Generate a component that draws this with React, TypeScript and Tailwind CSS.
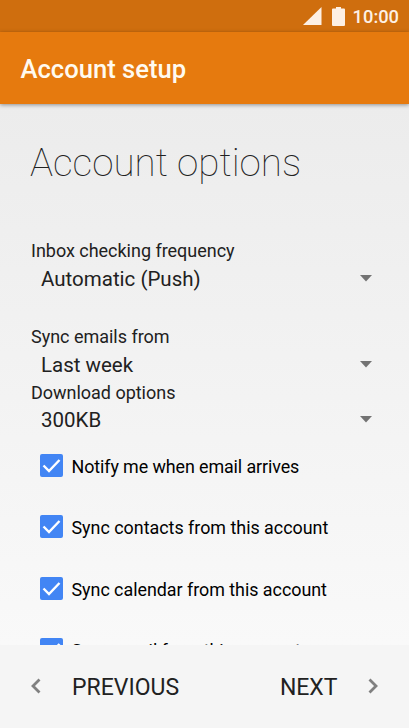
import React from 'react';

interface SpinnerProps {
    label: string;
    value: string;
    className?: string;
}

const spinners: SpinnerProps[] = [
    { label: 'Inbox checking frequency', value: 'Automatic (Push)', className: 'mb-[33.5px]' },
    { label: 'Sync emails from', value: 'Last week', className: 'mb-[3px]' },
    { label: 'Download options', value: '300KB', className: 'mb-[1px]' },
];

const checkboxes = [
    { label: 'Notify me when email arrives', className: 'tracking-[-0.1px]' },
    { label: 'Sync contacts from this account', className: 'tracking-[-0.01px]' },
    { label: 'Sync calendar from this account', className: 'tracking-[-0.03px]' },
    { label: 'Sync email from this account', className: 'tracking-[-0.07px]' },
];

const StatusBar: React.FC = () => (
    <div className="flex h-8 items-center justify-end bg-[#cf6e0e] pr-[10px] text-[#fdf0e4]">
        <svg className="h-[18px] w-[19px]" viewBox="0 0 19 18" fill="currentColor">
            <path d="M18.5 0v18H0z" />
        </svg>
        <svg className="ml-[10px] h-[19px] w-[13px]" viewBox="0 0 13 19" fill="currentColor">
            <path d="M4 0h5v1.5h3q1 0 1 1V18q0 1-1 1H1q-1 0-1-1V2.500q0-1 1-1h3z" />
        </svg>
        <span className="ml-[8px] pt-px text-[18.3px] font-medium leading-8">10:00</span>
    </div>
);

const Spinner: React.FC<SpinnerProps> = ({ label, value, className }) => (
    <div className={className}>
        <div className="h-6 whitespace-nowrap text-[18px] leading-[22px] tracking-[-0.02px]">{label}</div>
        <div className="flex h-[28.5px] items-center justify-between pl-[10px] pr-[6px]">
            <span className="whitespace-nowrap pt-px text-[20.5px] leading-[28.5px]">{value}</span>
            <svg className="h-[7px] w-3" viewBox="0 0 12 7" fill="#737373">
                <path d="M0 0h12L6 6.500z" />
            </svg>
        </div>
    </div>
);

const CheckRow: React.FC<{ label: string; className: string }> = ({ label, className }) => (
    <div className="flex h-[61.3px] items-start pl-[8.5px] text-black">
        <svg className="h-[23px] w-[23px] shrink-0" viewBox="0 0 23 23" fill="none">
            <rect width="23" height="23" rx="2" fill="#4285f4" />
            <path d="M3.500 11.500l5.500 5.500L19.500 6" stroke="#fff" strokeWidth="2.4" />
        </svg>
        <span className={`ml-[9px] whitespace-nowrap text-[17.9px] leading-[25px] ${className}`}>{label}</span>
    </div>
);

export default function App() {
    return (
        <div className="flex h-[728px] w-[409px] flex-col overflow-hidden bg-[#f5f5f5] font-['Roboto',sans-serif] text-[#212121]">
            <StatusBar />
            <header className="z-10 flex h-[72px] shrink-0 items-center bg-[#e67a0e] pl-[20.5px] pt-[2px] shadow-[0_1px_4px_rgba(0,0,0,0.4)]">
                <h1 className="text-[25.6px] font-medium leading-8 text-[#fffaf0]">Account setup</h1>
            </header>

            <main className="h-[541px] shrink-0 overflow-hidden bg-linear-to-b from-[#ececec] to-[#f9f9f9] px-[31px] pt-[35px]">
                <h2 className="-ml-px mb-[53px] whitespace-nowrap text-[38.6px] font-thin leading-[48px]">Account options</h2>
                {spinners.map((spinner) => (
                    <Spinner key={spinner.label} {...spinner} />
                ))}
                <div className="pt-[19px]">
                    {checkboxes.map((item) => (
                        <CheckRow key={item.label} {...item} />
                    ))}
                </div>
            </main>

            <footer className="flex h-[83px] shrink-0 items-center justify-between px-[31px] text-[23px]">
                <button className="flex items-center">
                    <svg className="mb-[2px] h-4 w-[10px]" viewBox="0 0 10 16" fill="none" stroke="#808080" strokeWidth="2.8">
                        <path d="M8.500 1.500L2 8l6.500 6.500" />
                    </svg>
                    <span className="ml-[31px] pt-1">PREVIOUS</span>
                </button>
                <button className="flex items-center">
                    <span className="mr-[30.5px] pt-1">NEXT</span>
                    <svg className="mb-[2px] h-4 w-[10px]" viewBox="0 0 10 16" fill="none" stroke="#808080" strokeWidth="2.8">
                        <path d="M1.500 1.500L8 8l-6.500 6.500" />
                    </svg>
                </button>
            </footer>
        </div>
    );
}
